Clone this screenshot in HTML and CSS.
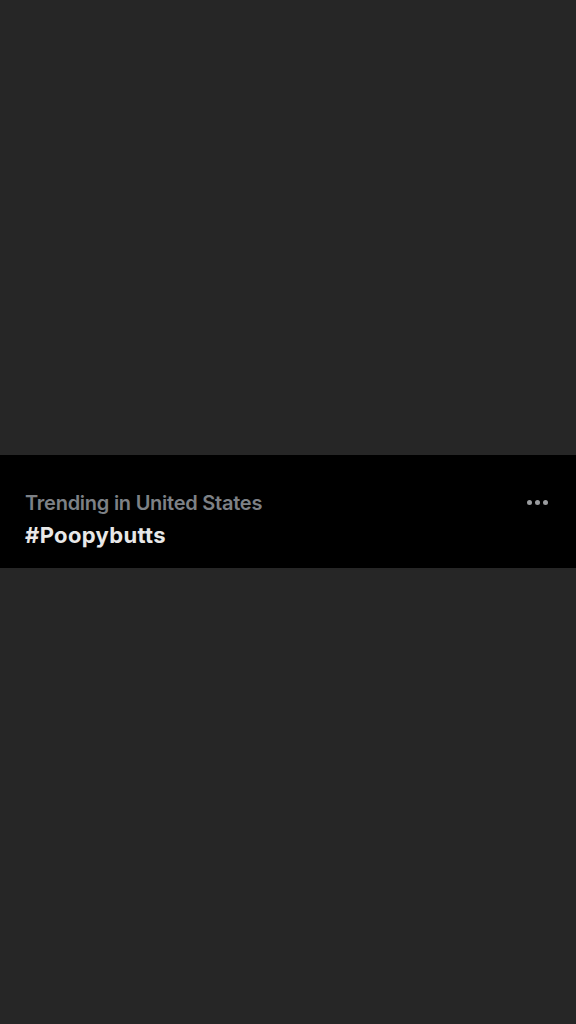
FILE: index.html
```html
<!DOCTYPE html>
<html>
<head>
<meta charset="utf-8">
<link rel="stylesheet" href="styles.css">
</head>
<body>
<div class="page">
  <div class="trend">
    <div class="trend-text">
      <div class="context">Trending in United States</div>
      <div class="tag">#Poopybutts</div>
    </div>
    <div class="more"><span></span><span></span><span></span></div>
  </div>
</div>
</body>
</html>
```
FILE: styles.css
```css
html, body { margin: 0; padding: 0; background: #262626; }
.page {
  width: 576px;
  height: 1024px;
  display: flex;
  flex-direction: column;
  padding-top: 455px;
  box-sizing: border-box;
}
.trend {
  background: #000;
  height: 113px;
  box-sizing: border-box;
  padding: 0 28px 0 25px;
  display: flex;
  align-items: flex-start;
  justify-content: space-between;
}
.trend-text {
  padding-top: 36px;
  font-family: Inter, "Noto Sans", sans-serif;
}
.context {
  color: #7d8186;
  font-size: 20px;
  font-weight: 600;
  line-height: 24px;
  letter-spacing: -0.25px;
}
.tag {
  color: #e8e8e8;
  font-size: 22px;
  font-weight: 700;
  line-height: 30px;
  margin-top: 5px;
  letter-spacing: 0.35px;
}
.more {
  display: flex;
  gap: 3px;
  margin-top: 45px;
}
.more span {
  width: 5px;
  height: 5px;
  border-radius: 50%;
  background: #9a9c9f;
}
```
